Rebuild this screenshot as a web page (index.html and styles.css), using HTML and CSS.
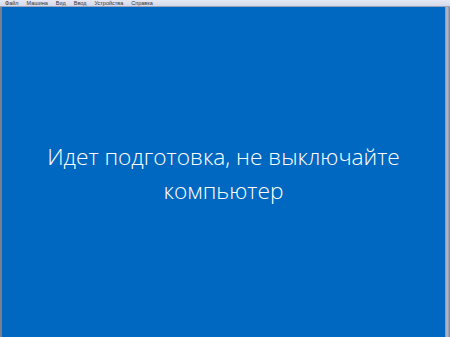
FILE: index.html
```html
<!DOCTYPE html>
<html lang="ru">
<head>
  <meta charset="UTF-8">
  <title>VM</title>
  <link rel="stylesheet" href="styles.css">
</head>
<body>
  <div class="window">
    <div class="menubar">
      <span>Файл</span>
      <span>Машина</span>
      <span>Вид</span>
      <span>Ввод</span>
      <span>Устройства</span>
      <span>Справка</span>
    </div>
    <div class="frame">
      <div class="edge-left"></div>
      <div class="screen">
        <p class="message">Идет подготовка, не выключайте<br>компьютер</p>
      </div>
      <div class="edge-right"></div>
    </div>
  </div>
</body>
</html>
```

FILE: styles.css
```css
html, body {
  margin: 0;
  padding: 0;
  height: 100%;
}
body {
  font-family: 'Open Sans', 'DejaVu Sans', sans-serif;
  background: #0068c0;
}
.window {
  display: flex;
  flex-direction: column;
  height: 100%;
}
.menubar {
  height: 6px;
  display: flex;
  align-items: center;
  gap: 8px;
  padding-left: 5px;
  background: linear-gradient(#e6e9f4, #d3d8ea);
  border-bottom: 1px solid #9aa3b8;
  font-family: 'Liberation Sans', Arial, sans-serif;
  font-size: 5.5px;
  color: #333;
  overflow: hidden;
}
.frame {
  flex: 1;
  display: flex;
}
.edge-left {
  width: 2px;
  background: #7a7e8c;
}
.edge-right {
  width: 5px;
  background: linear-gradient(90deg, #8d93a6, #b8bdcc 40%, #7c8293);
}
.screen {
  flex: 1;
  background: #0068c0;
  display: flex;
  align-items: center;
  justify-content: center;
}
.message {
  margin: 4px 0 0 0;
  color: #fff;
  font-weight: 300;
  font-size: 22.7px;
  line-height: 34px;
  text-align: center;
}
```
